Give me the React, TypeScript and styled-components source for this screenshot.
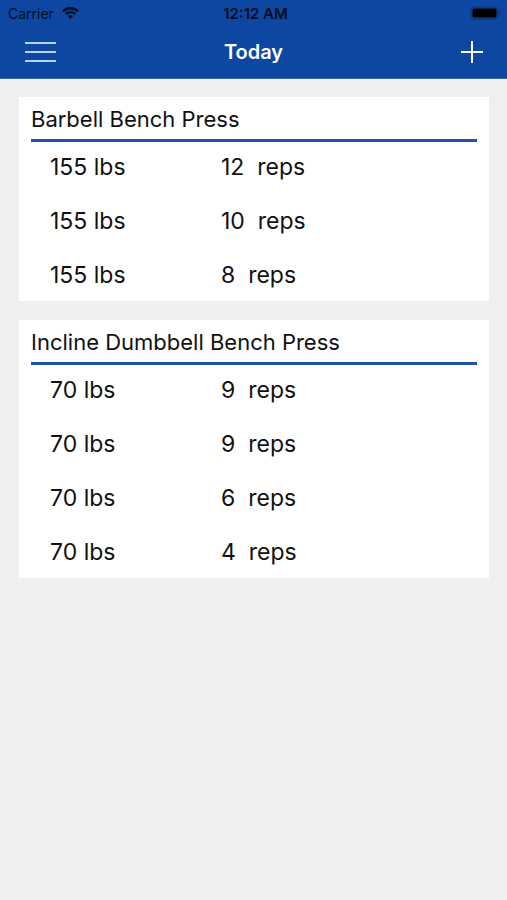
import React from "react";
import styled, { createGlobalStyle } from "styled-components";

const GlobalStyle = createGlobalStyle`
  * { box-sizing: border-box; }
  body {
    margin: 0;
    background: #efefef;
    color: #111;
    font-family: Inter, "Liberation Sans", sans-serif;
  }
`;

const Header = styled.header`
  background: #0d47a1;
  border-bottom: 1px solid #3a68b0;
`;

const StatusBar = styled.div`
  display: grid;
  grid-template-columns: 1fr auto 1fr;
  align-items: center;
  height: 26px;
  padding: 0 4px 0 8px;
  color: #020c22;
  font-size: 14px;
`;

const Carrier = styled.span`
  display: flex;
  align-items: center;
  gap: 8px;
`;

const Clock = styled.span`
  font-size: 15px;
  font-weight: 600;
`;

const Battery = styled.svg`
  justify-self: end;
`;

const NavBar = styled.nav`
  display: grid;
  grid-template-columns: 1fr auto 1fr;
  align-items: center;
  height: 52px;
  padding: 0 22px;
`;

const IconButton = styled.button<{ $end?: boolean }>`
  display: flex;
  justify-self: ${(p) => (p.$end ? "end" : "start")};
  padding: 0 2px;
  border: 0;
  background: none;
  color: ${(p) => (p.$end ? "#fff" : "#b5d3f8")};
  cursor: pointer;
`;

const Title = styled.h1`
  margin: 0;
  color: #fff;
  font-size: 20px;
  font-weight: 600;
`;

const Main = styled.main`
  display: flex;
  flex-direction: column;
  gap: 19px;
  padding: 18px 18px 18px 19px;
`;

const Card = styled.section`
  padding: 0 12px 1px;
  background: #fff;
`;

const Exercise = styled.h2`
  margin: 0;
  padding-top: 2px;
  border-bottom: 3px solid #1e53a5;
  font-size: 22px;
  font-weight: 400;
  line-height: 40px;
`;

const SetTable = styled.table`
  width: 100%;
  border-collapse: collapse;
  table-layout: fixed;
  font-size: 23px;
`;

const SetRow = styled.tr`
  & + & > td {
    height: 54px;
    padding-top: 4px;
  }
`;

const Cell = styled.td<{ $wide?: boolean }>`
  width: ${(p) => (p.$wide ? "auto" : "190px")};
  height: 50px;
  padding: 0 0 0 ${(p) => (p.$wide ? "0" : "19px")};
  white-space: pre;
`;

const exercises = [
  { name: "Barbell Bench Press", weight: 155, reps: [12, 10, 8] },
  { name: "Incline Dumbbell Bench Press", weight: 70, reps: [9, 9, 6, 4] },
];

export default function App() {
  return (
    <>
      <GlobalStyle />
      <Header>
        <StatusBar>
          <Carrier>
            Carrier
            <svg width="17" height="12" viewBox="0 0 17 12" fill="none" stroke="currentColor" strokeWidth="2.4" aria-hidden="true">
              <path d="M1 4.3a10.7 10.7 0 0 1 15 0M3.7 7.1a6.9 6.9 0 0 1 9.6 0" />
              <path d="m8.5 12-2.6-2.7a3.7 3.7 0 0 1 5.2 0z" fill="currentColor" stroke="none" />
            </svg>
          </Carrier>
          <Clock>12:12 AM</Clock>
          <Battery width="33" height="14" viewBox="0 0 33 14" aria-label="Battery full">
            <rect x="1" y="1" width="27" height="12" rx="3" fill="none" stroke="#082f70" />
            <rect x="2.5" y="2.5" width="24" height="9" rx="1.5" fill="#000" />
            <path d="M30 5q2 2 0 4z" fill="#082f70" />
          </Battery>
        </StatusBar>
        <NavBar>
          <IconButton aria-label="Menu">
            <svg width="32" height="22" viewBox="0 0 32 22" stroke="currentColor" strokeWidth="2">
              <path d="M1 2h31M1 11h31M1 20h31" />
            </svg>
          </IconButton>
          <Title>Today</Title>
          <IconButton $end aria-label="Add set">
            <svg width="22" height="22" viewBox="0 0 22 22" stroke="currentColor" strokeWidth="2">
              <path d="M0 11h22M11 0v22" />
            </svg>
          </IconButton>
        </NavBar>
      </Header>
      <Main>
        {exercises.map((exercise) => (
          <Card key={exercise.name}>
            <Exercise>{exercise.name}</Exercise>
            <SetTable>
              <tbody>
                {exercise.reps.map((reps, index) => (
                  <SetRow key={index}>
                    <Cell>{exercise.weight} lbs</Cell>
                    <Cell $wide>{`${reps}  reps`}</Cell>
                  </SetRow>
                ))}
              </tbody>
            </SetTable>
          </Card>
        ))}
      </Main>
    </>
  );
}
